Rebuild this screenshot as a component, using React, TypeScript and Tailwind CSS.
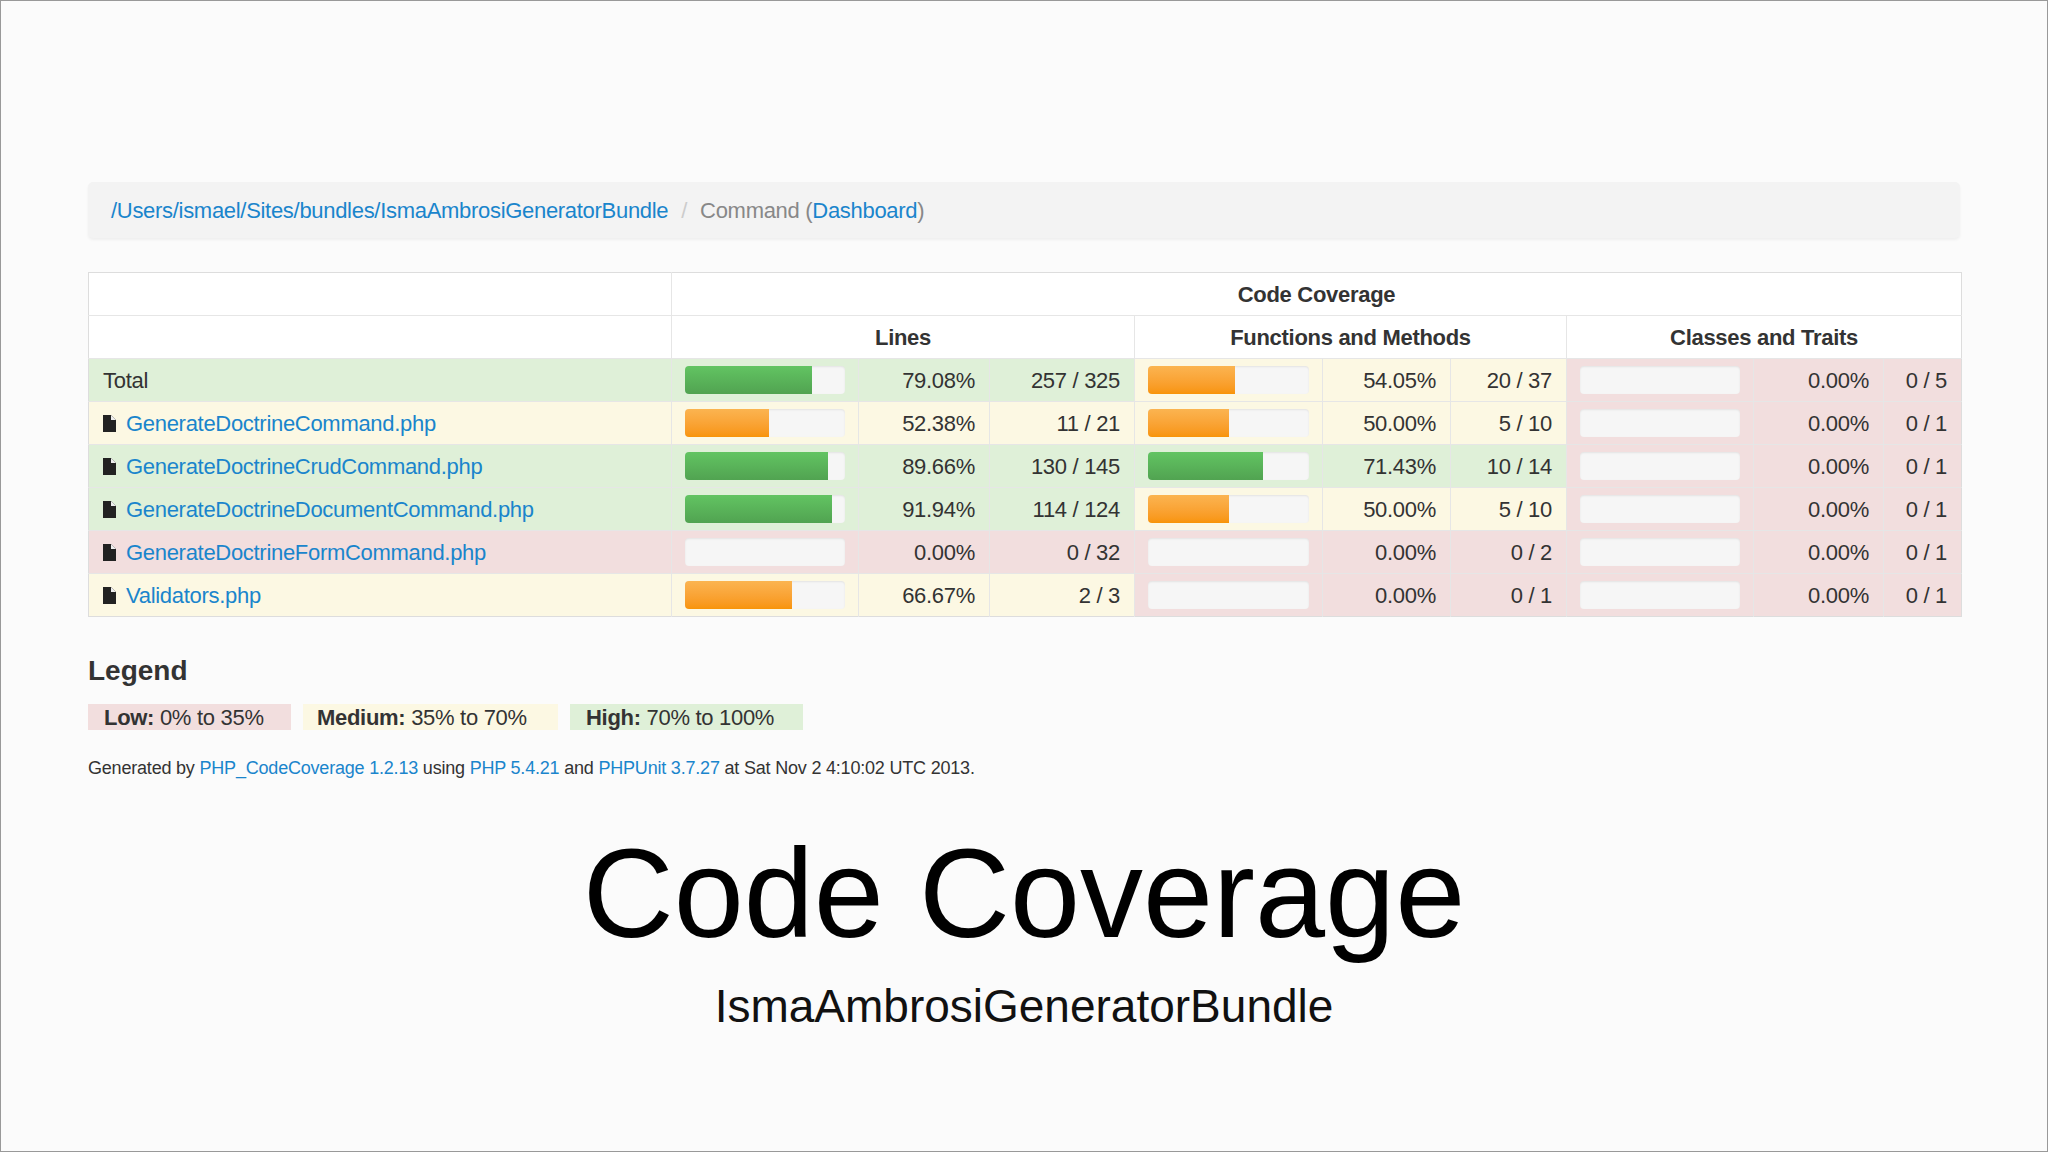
import React from 'react';

type Metric = { pct: number; label: string; count: string };
type Row = { name: string; file: boolean; lines: Metric; funcs: Metric; classes: Metric };

const rows: Row[] = [
  { name: 'Total', file: false, lines: { pct: 79.08, label: '79.08%', count: '257 / 325' }, funcs: { pct: 54.05, label: '54.05%', count: '20 / 37' }, classes: { pct: 0, label: '0.00%', count: '0 / 5' } },
  { name: 'GenerateDoctrineCommand.php', file: true, lines: { pct: 52.38, label: '52.38%', count: '11 / 21' }, funcs: { pct: 50, label: '50.00%', count: '5 / 10' }, classes: { pct: 0, label: '0.00%', count: '0 / 1' } },
  { name: 'GenerateDoctrineCrudCommand.php', file: true, lines: { pct: 89.66, label: '89.66%', count: '130 / 145' }, funcs: { pct: 71.43, label: '71.43%', count: '10 / 14' }, classes: { pct: 0, label: '0.00%', count: '0 / 1' } },
  { name: 'GenerateDoctrineDocumentCommand.php', file: true, lines: { pct: 91.94, label: '91.94%', count: '114 / 124' }, funcs: { pct: 50, label: '50.00%', count: '5 / 10' }, classes: { pct: 0, label: '0.00%', count: '0 / 1' } },
  { name: 'GenerateDoctrineFormCommand.php', file: true, lines: { pct: 0, label: '0.00%', count: '0 / 32' }, funcs: { pct: 0, label: '0.00%', count: '0 / 2' }, classes: { pct: 0, label: '0.00%', count: '0 / 1' } },
  { name: 'Validators.php', file: true, lines: { pct: 66.67, label: '66.67%', count: '2 / 3' }, funcs: { pct: 0, label: '0.00%', count: '0 / 1' }, classes: { pct: 0, label: '0.00%', count: '0 / 1' } },
];

const level = (p: number) => (p >= 70 ? 'bg-[#dff0d8]' : p >= 35 ? 'bg-[#fcf8e3]' : 'bg-[#f2dede]');

const Bar = ({ pct }: { pct: number }) => (
  <div className="h-[28px] w-full rounded-[4px] bg-[#f6f6f6] shadow-[inset_0_1px_2px_rgba(0,0,0,0.08)] overflow-hidden">
    {pct > 0 && (
      <div
        className={pct >= 70 ? 'h-full bg-gradient-to-b from-[#62c462] to-[#51a351]' : 'h-full bg-gradient-to-b from-[#fbb450] to-[#f89406]'}
        style={{ width: `${pct}%` }}
      />
    )}
  </div>
);

const FileIcon = () => (
  <svg width="13" height="17" viewBox="0 0 13 17" className="mr-[10px] shrink-0">
    <path d="M0 0h8l5 5v12H0z" fill="#222" />
    <path d="M8 0v5h5" fill="#eee" />
  </svg>
);

const MetricCells = ({ m }: { m: Metric }) => {
  const bg = level(m.pct);
  return (
    <>
      <td className={`${bg} px-[13px] border-l border-[#e6e6e6]`}><Bar pct={m.pct} /></td>
      <td className={`${bg} pr-[14px] text-right border-l border-[#e6e6e6]`}>{m.label}</td>
      <td className={`${bg} pr-[14px] text-right border-l border-[#e6e6e6]`}>{m.count}</td>
    </>
  );
};

export default function App() {
  return (
    <div className="w-[2048px] h-[1152px] bg-[#fbfbfb] border border-[#999] text-[#333] font-[family-name:Liberation_Sans,Arial,sans-serif] overflow-hidden">
      <div className="px-[87px] pt-[181px]">
        <div className="h-[56px] rounded-[5px] bg-[#f3f3f3] shadow-[0_2px_3px_rgba(0,0,0,0.05)] flex items-center px-[23px] text-[22px] tracking-[-0.3px]">
          <span className="text-[#1a85cc]">/Users/ismael/Sites/bundles/IsmaAmbrosiGeneratorBundle</span>
          <span className="text-[#ccc] mx-[13px]">/</span>
          <span className="text-[#888]">Command (</span>
          <span className="text-[#1a85cc]">Dashboard</span>
          <span className="text-[#888]">)</span>
        </div>

        <table className="mt-[34px] w-[1873px] border-collapse border border-[#ddd] text-[22px] tracking-[-0.3px] table-fixed">
          <colgroup>
            <col className="w-[583px]" />
            <col className="w-[187px]" />
            <col className="w-[131px]" />
            <col className="w-[145px]" />
            <col className="w-[188px]" />
            <col className="w-[128px]" />
            <col className="w-[116px]" />
            <col className="w-[187px]" />
            <col className="w-[130px]" />
            <col className="w-[78px]" />
          </colgroup>
          <tbody>
            <tr className="h-[43px] bg-white">
              <td />
              <td colSpan={9} className="text-center font-bold border-l border-[#e6e6e6]">Code Coverage</td>
            </tr>
            <tr className="h-[43px] bg-white border-t border-[#e6e6e6]">
              <td />
              <td colSpan={3} className="text-center font-bold border-l border-[#e6e6e6]">Lines</td>
              <td colSpan={3} className="text-center font-bold border-l border-[#e6e6e6]">Functions and Methods</td>
              <td colSpan={3} className="text-center font-bold border-l border-[#e6e6e6]">Classes and Traits</td>
            </tr>
            {rows.map((r) => (
              <tr key={r.name} className="h-[43px] border-t border-[#e6e6e6]">
                <td className={`${level(r.lines.pct)} px-[14px]`}>
                  <div className="flex items-center">
                    {r.file && <FileIcon />}
                    <span className={r.file ? 'text-[#1a85cc]' : ''}>{r.name}</span>
                  </div>
                </td>
                <MetricCells m={r.lines} />
                <MetricCells m={r.funcs} />
                <MetricCells m={r.classes} />
              </tr>
            ))}
          </tbody>
        </table>

        <h2 className="mt-[33px] text-[28px] font-bold">Legend</h2>
        <div className="mt-[12px] flex gap-[12px] text-[22px] tracking-[-0.3px]">
          <span className="h-[26px] w-[203px] bg-[#f2dede] px-[16px] flex items-center"><b>Low:</b>&nbsp;0% to 35%</span>
          <span className="h-[26px] w-[255px] bg-[#fcf8e3] px-[14px] flex items-center"><b>Medium:</b>&nbsp;35% to 70%</span>
          <span className="h-[26px] w-[233px] bg-[#dff0d8] px-[16px] flex items-center"><b>High:</b>&nbsp;70% to 100%</span>
        </div>
        <p className="mt-[25px] text-[18px] tracking-[-0.2px]">
          Generated by <span className="text-[#1a85cc]">PHP_CodeCoverage 1.2.13</span> using <span className="text-[#1a85cc]">PHP 5.4.21</span> and <span className="text-[#1a85cc]">PHPUnit 3.7.27</span> at Sat Nov 2 4:10:02 UTC 2013.
        </p>
      </div>

      <div className="flex flex-col items-center mt-[42px] text-black">
        <div className="text-[126px] leading-[140px]">Code Coverage</div>
        <div className="mt-[14px] text-[46px] leading-[56px] text-[#111]">IsmaAmbrosiGeneratorBundle</div>
      </div>
    </div>
  );
}
